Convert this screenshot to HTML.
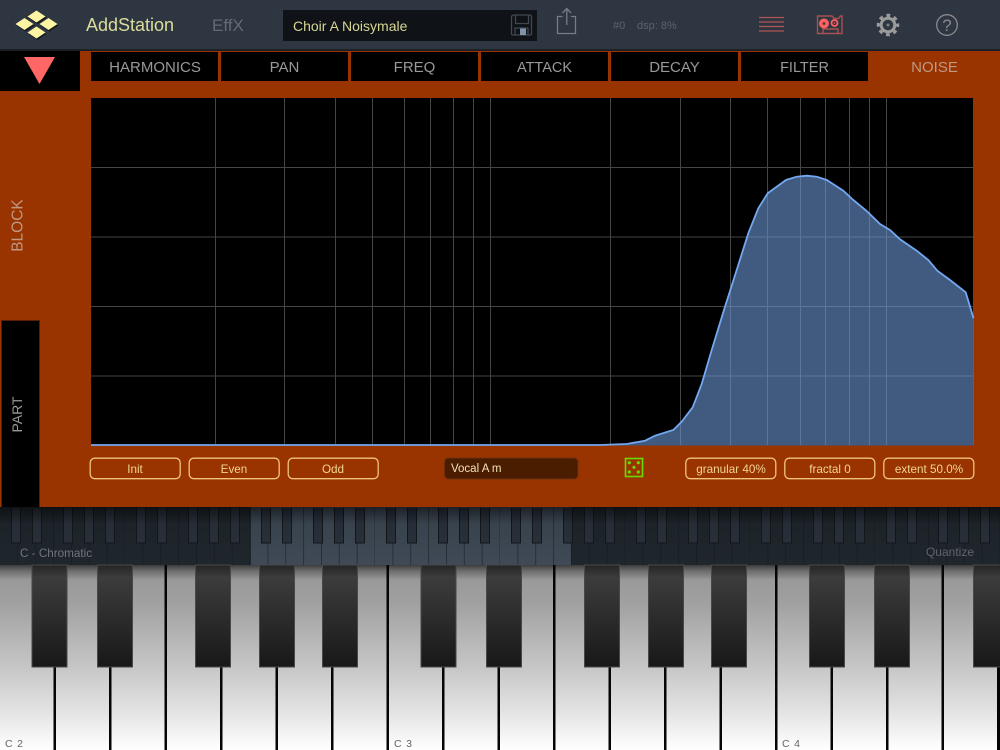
<!DOCTYPE html>
<html>
<head>
<meta charset="utf-8">
<style>
html,body{margin:0;padding:0;width:1000px;height:750px;overflow:hidden;background:#2e3642}
svg{display:block}
text{font-family:"Liberation Sans",sans-serif}
</style>
</head>
<body>
<svg width="1000" height="750" viewBox="0 0 1000 750" xmlns="http://www.w3.org/2000/svg">
<defs>
<linearGradient id="white" x1="0" y1="0" x2="0" y2="1">
<stop offset="0" stop-color="#3c3c3c"/><stop offset=".03" stop-color="#6a6a6a"/><stop offset=".08" stop-color="#999"/><stop offset=".2" stop-color="#a0a0a0"/><stop offset=".55" stop-color="#c6c6c6"/><stop offset=".8" stop-color="#e4e4e4"/><stop offset="1" stop-color="#fff"/>
</linearGradient>
<linearGradient id="black" x1="0" y1="0" x2="0" y2="1">
<stop offset="0" stop-color="#242424"/><stop offset=".12" stop-color="#3c3c3c"/><stop offset="1" stop-color="#181818"/>
</linearGradient>
<linearGradient id="miniShade" x1="0" y1="0" x2="0" y2="1">
<stop offset="0" stop-color="#000" stop-opacity=".55"/><stop offset=".3" stop-color="#000" stop-opacity=".1"/><stop offset="1" stop-color="#000" stop-opacity="0"/>
</linearGradient>
<pattern id="miniSeps" x="0" y="508" width="125" height="57" patternUnits="userSpaceOnUse">
<g fill="#12171b" fill-opacity=".5">
<rect x="17.4" y="0" width="1" height="57"/><rect x="35.2" y="0" width="1" height="57"/><rect x="53.1" y="0" width="1" height="57"/><rect x="71" y="0" width="1" height="57"/><rect x="88.8" y="0" width="1" height="57"/><rect x="106.7" y="0" width="1" height="57"/><rect x="124.5" y="0" width="1" height="57"/>
</g>
</pattern>
<pattern id="miniBlack" x="0" y="508" width="125" height="36" patternUnits="userSpaceOnUse">
<g fill="#2a323d" stroke="#14181c" stroke-width="1">
<rect x="11.5" y="-2" width="9" height="37"/><rect x="32.5" y="-2" width="9" height="37"/><rect x="63.5" y="-2" width="9" height="37"/><rect x="84.5" y="-2" width="9" height="37"/><rect x="105.5" y="-2" width="9" height="37"/>
</g>
</pattern>
<g id="bk">
<rect x=".5" y="0" width="35" height="102" fill="url(#black)" stroke="#484848" stroke-width="1"/>
</g>
<g id="oct">
<use href="#bk" x="31.5" y="565"/><use href="#bk" x="97" y="565"/><use href="#bk" x="195" y="565"/><use href="#bk" x="259" y="565"/><use href="#bk" x="322" y="565"/>
</g>
</defs>

<!-- header -->
<rect width="1000" height="50" fill="#2e3642"/>
<rect y="49" width="1000" height="2" fill="#1c1f24"/>
<g fill="#000" opacity=".55" transform="translate(1,1.5)">
<polygon points="36.500,10.500 45.500,16.500 36.500,22.500 27.500,16.500"/><polygon points="24.500,18 33.500,24 24.500,30 15.500,24"/><polygon points="48.500,18 57.500,24 48.500,30 39.500,24"/><polygon points="36.500,26.500 45.500,32.500 36.500,38.500 27.500,32.500"/>
</g>
<g fill="#fdf5a3">
<polygon points="36.500,10.500 45.500,16.500 36.500,22.500 27.500,16.500"/><polygon points="24.500,18 33.500,24 24.500,30 15.500,24"/><polygon points="48.500,18 57.500,24 48.500,30 39.500,24"/><polygon points="36.500,26.500 45.500,32.500 36.500,38.500 27.500,32.500"/>
</g>
<text x="86" y="31" font-size="18" fill="#dcdc9c">AddStation</text>
<text x="212" y="31" font-size="17" fill="#666b72">EffX</text>
<rect x="283" y="10" width="254" height="31" fill="#0f1317"/>
<text x="293" y="31" font-size="14" fill="#d6d692">Choir A Noisymale</text>
<!-- save icon -->
<g fill="none" stroke="#42484f" stroke-width="1.300">
<path d="M511.500 17.500q0-2.500 2.500-2.500h15.500q2 0 2 2v16.500q0 1.500-1.500 1.500h-17q-1.500 0-1.500-1.500z"/>
<path d="M515.500 15v8.500h13V15"/>
<path d="M515 35V28h13v7"/>
</g>
<rect x="520" y="28.500" width="6" height="6.500" fill="#7f94ab"/>
<!-- share icon -->
<g fill="none" stroke="#777d84" stroke-width="1.300">
<path d="M562.500 16.500H557.500V33.500H575.500V16.500H571"/>
<path d="M566.800 25V9"/>
<path d="M562.500 13L566.800 8.500L571 13"/>
</g>
<text x="613" y="29" font-size="11" fill="#5d636c">#0</text>
<text x="637" y="29" font-size="11" fill="#5d636c">dsp: 8%</text>
<!-- hamburger -->
<g stroke="#b25555" stroke-width="1.300">
<line x1="759" y1="17.500" x2="784" y2="17.500"/><line x1="759" y1="22" x2="784" y2="22"/><line x1="759" y1="26.500" x2="784" y2="26.500"/><line x1="759" y1="31" x2="784" y2="31"/>
</g>
<!-- tape -->
<g fill="none" stroke="#a85050" stroke-width="1.400">
<path d="M817.500 16H832L834 18.500H838.500L840.500 16H842V33.500H817.500Z"/>
<path d="M823 33.500V29H838V33.500"/>
</g>
<circle cx="824" cy="23.500" r="5" fill="#ff6060"/><circle cx="824" cy="23.500" r="1.300" fill="#2e3642"/>
<circle cx="834.500" cy="23" r="3" fill="none" stroke="#ff6060" stroke-width="1.800"/><circle cx="834.500" cy="23" r=".8" fill="#ff6060"/>
<!-- gear -->
<circle cx="888" cy="25" r="9.500" fill="none" stroke="#9a9a9a" stroke-width="3.500" stroke-dasharray="3.730 3.730" stroke-dashoffset="1.860"/>
<circle cx="888" cy="25" r="6.800" fill="none" stroke="#9a9a9a" stroke-width="3"/>
<circle cx="888" cy="25" r="1.500" fill="#7f7f7f"/>
<!-- help -->
<circle cx="947" cy="25" r="10.300" fill="none" stroke="#8a8a8a" stroke-width="1.300"/>
<text x="947" y="31" font-size="17" fill="#8a8a8a" text-anchor="middle">?</text>

<!-- orange panel -->
<rect y="51" width="1000" height="456" fill="#993300"/>
<rect x="0" y="51" width="80" height="40" fill="#000"/>
<polygon points="24,57 55,57 39.500,84" fill="#ff6666"/>
<g fill="#000">
<rect x="91" y="52" width="127" height="29"/><rect x="221" y="52" width="127" height="29"/><rect x="351" y="52" width="127" height="29"/><rect x="481" y="52" width="127" height="29"/><rect x="611" y="52" width="127" height="29"/><rect x="741" y="52" width="127" height="29"/>
</g>
<g font-size="15" fill="#999" text-anchor="middle">
<text x="155" y="72">HARMONICS</text><text x="284.500" y="72">PAN</text><text x="414.500" y="72">FREQ</text><text x="544.500" y="72" font-size="14.500">ATTACK</text><text x="674.500" y="72">DECAY</text><text x="804.500" y="72" font-size="14.500">FILTER</text><text x="934.500" y="72" fill="#bf9985">NOISE</text>
</g>
<!-- sidebar -->
<text transform="translate(22.500,225.500) rotate(-90)" font-size="15.500" fill="#bf9985" text-anchor="middle">BLOCK</text>
<rect x="1.500" y="320.500" width="38" height="187" fill="#000" stroke="#5a1f00" stroke-width="1"/>
<text transform="translate(22,414.500) rotate(-90)" font-size="14" fill="#999" text-anchor="middle">PART</text>

<!-- graph -->
<rect x="91" y="98" width="882" height="347.500" fill="#000"/>
<g stroke="#454545" stroke-width="1">
<line x1="91" x2="973" y1="167.500" y2="167.500"/><line x1="91" x2="973" y1="237" y2="237"/><line x1="91" x2="973" y1="306.500" y2="306.500"/><line x1="91" x2="973" y1="376" y2="376"/>
<line x1="215.500" x2="215.500" y1="98" y2="445"/><line x1="284.500" x2="284.500" y1="98" y2="445"/><line x1="335.500" x2="335.500" y1="98" y2="445"/><line x1="372.500" x2="372.500" y1="98" y2="445"/><line x1="404.500" x2="404.500" y1="98" y2="445"/><line x1="430.500" x2="430.500" y1="98" y2="445"/><line x1="453.500" x2="453.500" y1="98" y2="445"/><line x1="473.500" x2="473.500" y1="98" y2="445"/><line x1="490.500" x2="490.500" y1="98" y2="445"/>
<line x1="610.500" x2="610.500" y1="98" y2="445"/><line x1="680.500" x2="680.500" y1="98" y2="445"/><line x1="730.500" x2="730.500" y1="98" y2="445"/><line x1="767.500" x2="767.500" y1="98" y2="445"/><line x1="800.500" x2="800.500" y1="98" y2="445"/><line x1="825.500" x2="825.500" y1="98" y2="445"/><line x1="849.500" x2="849.500" y1="98" y2="445"/><line x1="869.500" x2="869.500" y1="98" y2="445"/><line x1="886.500" x2="886.500" y1="98" y2="445"/>
</g>
<path d="M91 445H600L626.700 444L645 440.700L655 435.700L673.300 430L681.700 421.700L692.700 407.300L701.700 384L711.700 350L725 306.700L736.700 270L748.300 233.300L758.300 208.300L767.700 193.300L786 180L796.700 176.700L806.700 175.700L816.700 176.700L826.700 180L843.300 190.700L853.300 200L866.700 211L880 224L890 230L900 239.300L916.700 250.700L928.300 260L937.300 270.700L950 280L965.700 292.300L973.500 318.300V445.500H91Z" fill="rgb(107,150,213)" fill-opacity=".6"/>
<path d="M91 445H600L626.700 444L645 440.700L655 435.700L673.300 430L681.700 421.700L692.700 407.300L701.700 384L711.700 350L725 306.700L736.700 270L748.300 233.300L758.300 208.300L767.700 193.300L786 180L796.700 176.700L806.700 175.700L816.700 176.700L826.700 180L843.300 190.700L853.300 200L866.700 211L880 224L890 230L900 239.300L916.700 250.700L928.300 260L937.300 270.700L950 280L965.700 292.300L973.500 318.300" fill="none" stroke="#72a9f0" stroke-width="1.800"/>

<!-- buttons -->
<g fill="none" stroke="#f0c47c" stroke-width="1.300">
<rect x="90.200" y="458.200" width="90" height="20.500" rx="4.500"/><rect x="189.200" y="458.200" width="90" height="20.500" rx="4.500"/><rect x="288.200" y="458.200" width="90" height="20.500" rx="4.500"/>
<rect x="685.800" y="458.200" width="90" height="20.500" rx="4.500"/><rect x="784.800" y="458.200" width="90" height="20.500" rx="4.500"/><rect x="883.800" y="458.200" width="90" height="20.500" rx="4.500"/>
</g>
<g font-size="11.700" fill="#f2d494" text-anchor="middle">
<text x="135" y="473">Init</text><text x="234" y="473">Even</text><text x="333" y="473">Odd</text>
<text x="731" y="473">granular 40%</text><text x="830" y="473">fractal 0</text><text x="929" y="473">extent 50.0%</text>
</g>
<rect x="444.500" y="458" width="133.500" height="21" rx="4" fill="#4a1c00" stroke="#6e3010" stroke-width="1"/>
<text x="451" y="472" font-size="11.500" fill="#f2e2b4">Vocal A m</text>
<!-- dice -->
<rect x="625.500" y="458.500" width="17" height="18" fill="none" stroke="#66dd00" stroke-width="1.600"/>
<g fill="#66dd00">
<circle cx="629.300" cy="462.700" r="1.600"/><circle cx="638.300" cy="462.700" r="1.600"/><circle cx="634" cy="467.300" r="1.600"/><circle cx="629.300" cy="472" r="1.600"/><circle cx="638.300" cy="472" r="1.600"/>
</g>

<!-- mini keyboard -->
<rect y="507" width="1000" height="58" fill="#1f272d"/>
<rect x="251" y="507" width="320" height="58" fill="#3f4a56"/>
<rect y="508" width="1000" height="57" fill="url(#miniSeps)"/>
<rect y="508" width="1000" height="36" fill="url(#miniBlack)"/>
<rect y="507" width="1000" height="58" fill="url(#miniShade)"/>
<text x="20" y="557" font-size="11.700" fill="#70757b">C - Chromatic</text>
<text x="974" y="556" font-size="12" fill="#5f656b" text-anchor="end">Quantize</text>

<!-- main keyboard -->
<rect y="565" width="1000" height="185" fill="url(#white)"/>
<g fill="#050505">
<rect x="53.500" y="565" width="2.500" height="185"/><rect x="109" y="565" width="2.500" height="185"/><rect x="164.500" y="565" width="2.500" height="185"/><rect x="220" y="565" width="2.500" height="185"/><rect x="275.500" y="565" width="2.500" height="185"/><rect x="331" y="565" width="2.500" height="185"/><rect x="386.500" y="565" width="2.500" height="185"/><rect x="442" y="565" width="2.500" height="185"/><rect x="497.500" y="565" width="2.500" height="185"/><rect x="553" y="565" width="2.500" height="185"/><rect x="608.500" y="565" width="2.500" height="185"/><rect x="664" y="565" width="2.500" height="185"/><rect x="719.500" y="565" width="2.500" height="185"/><rect x="775" y="565" width="2.500" height="185"/><rect x="830.500" y="565" width="2.500" height="185"/><rect x="886" y="565" width="2.500" height="185"/><rect x="941.500" y="565" width="2.500" height="185"/><rect x="997" y="565" width="3" height="185"/>
</g>
<use href="#oct" x="0"/>
<use href="#oct" x="389"/>
<use href="#bk" x="809" y="565"/><use href="#bk" x="874" y="565"/><use href="#bk" x="973" y="565"/>
<g font-size="10.500" fill="#666" letter-spacing=".8">
<text x="5" y="747">C 2</text><text x="394" y="747">C 3</text><text x="782" y="747">C 4</text>
</g>
</svg>
</body>
</html>
